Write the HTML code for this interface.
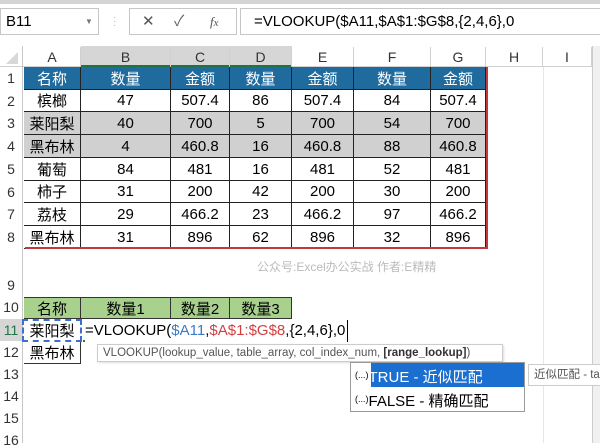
<!DOCTYPE html>
<html><head><meta charset="utf-8"><style>
*{margin:0;padding:0;box-sizing:border-box}
body{width:600px;height:443px;overflow:hidden;background:#fff;position:relative;font-family:"Liberation Sans","Noto Sans CJK SC",sans-serif;color:#000}
.a{position:absolute}
.c{position:absolute;display:flex;align-items:center;justify-content:center;font-size:15px;white-space:nowrap}
.rh{position:absolute;left:0;width:22px;font-size:14px;color:#333;text-align:center}
.ch{position:absolute;top:47px;height:20px;font-size:14px;color:#333;text-align:center;line-height:20px;border-right:1px solid #d0d0d0}
</style></head><body>
<div class="a" style="left:0;top:0;width:600px;height:4px;background:#d4d4d4"></div>
<div class="a" style="left:0;top:8px;width:99px;height:27px;border:1px solid #c6c6c6;font-size:15px;line-height:25px;padding-left:5px">B11<span style="position:absolute;left:84px;font-size:8px;color:#777">▼</span></div>
<div class="a" style="left:113px;top:16px;color:#bbb;font-size:10px;line-height:4px">·<br>·<br>·</div>
<div class="a" style="left:129px;top:8px;width:108px;height:27px;border:1px solid #c6c6c6;font-size:15px;color:#555;line-height:25px"><span class="a" style="left:12px">✕</span><span class="a" style="left:44px;color:#666">✓</span><span class="a" style="left:80px;font-family:'Liberation Serif';font-style:italic;font-size:13px">f<small>x</small></span></div>
<div class="a" style="left:240px;top:8px;width:362px;height:27px;border:1px solid #c6c6c6;font-size:15px;line-height:25px;padding-left:13px">=VLOOKUP($A11,$A$1:$G$8,{2,4,6},0</div>
<div class="a" style="left:0;top:46px;width:592px;height:21px;background:#fff;border-bottom:1px solid #d0d0d0"></div>
<div class="a" style="left:6px;top:52px;width:0;height:0;border-left:12px solid transparent;border-bottom:12px solid #d8d8d8"></div>
<div class="a" style="left:81px;top:46px;width:211px;height:21px;background:#d6d6d6;border-bottom:2px solid #217346"></div>
<div class="ch" style="left:24px;width:57px">A</div><div class="ch" style="left:81px;width:90px">B</div><div class="ch" style="left:171px;width:59px">C</div><div class="ch" style="left:230px;width:62px">D</div><div class="ch" style="left:292px;width:62px">E</div><div class="ch" style="left:354px;width:77px">F</div><div class="ch" style="left:431px;width:55px">G</div><div class="ch" style="left:486px;width:57px">H</div><div class="ch" style="left:543px;width:49px">I</div>
<div class="a" style="left:22px;top:46px;width:1px;height:397px;background:#c8c8c8"></div>
<div class="a" style="left:592px;top:46px;width:8px;height:397px;background:#f0f0f0;border-left:1px solid #ccc"></div>
<div class="a" style="left:543px;top:67px;width:1px;height:376px;background:#e6e6e6"></div>
<div id="rows"></div>
<div class="a" style="left:25px;top:247px;width:463px;height:2px;background:#c0393b"></div>
<div class="a" style="left:486px;top:67px;width:2px;height:181px;background:#c0393b"></div>
<div class="a" style="left:257px;top:258px;font-size:12px;color:#bbb">公众号:Excel办公实战 作者:E精精</div>
<script>
(function(){
var cols=[24,81,171,230,292,354,431,486];
var data=[["名称","数量","金额","数量","金额","数量","金额"],["槟榔","47","507.4","86","507.4","84","507.4"],["莱阳梨","40","700","5","700","54","700"],["黑布林","4","460.8","16","460.8","88","460.8"],["葡萄","84","481","16","481","52","481"],["柿子","31","200","42","200","30","200"],["荔枝","29","466.2","23","466.2","97","466.2"],["黑布林","31","896","62","896","32","896"]];
var h="";
for(var r=0;r<8;r++){var ty=Math.round(67+r*22.7);var ny=Math.round(67+(r+1)*22.7);
 h+='<div class="rh" style="top:'+(ty+3)+'px">'+(r+1)+'</div>';
 for(var c=0;c<7;c++){var bg=r==0?'#1f6b9e':(r==2||r==3?'#d0d0d0':'#fff');var col=r==0?'#fff':'#000';
 h+='<div class="c" style="left:'+cols[c]+'px;top:'+ty+'px;width:'+(cols[c+1]-cols[c])+'px;height:'+(ny-ty)+'px;background:'+bg+';color:'+col+';border-right:1px solid #222;border-bottom:1px solid #222">'+data[r][c]+'</div>';}}
var rl=[[9,249,48],[10,297,22],[11,319,23],[12,342,22],[13,364,22],[14,386,22],[15,408,22],[16,430,22]];
rl.forEach(function(x){h+='<div class="rh" style="top:'+(x[1]+x[2]-20)+'px;'+(x[0]==11?'background:#d6d6d6;color:#217346;height:22px;top:319px;line-height:22px':'')+'">'+x[0]+'</div>';});
var g=[24,81,171,230,292];var t=["名称","数量1","数量2","数量3"];
for(var c=0;c<4;c++)h+='<div class="c" style="left:'+g[c]+'px;top:297px;width:'+(g[c+1]-g[c])+'px;height:22px;background:#a9d18e;border:1px solid #333;border-left:'+(c?0:1)+'px">'+t[c]+'</div>';
h+='<div class="c" style="left:24px;top:342px;width:57px;height:22px;border-right:1px solid #333;border-bottom:1px solid #333">黑布林</div>';
h+='<div class="c" style="left:22px;top:319px;width:60px;height:23px;border:2px dashed #3c6fd0">莱阳梨</div>';
h+='<div class="a" style="left:83px;top:319px;width:210px;height:23px;background:#fff;border-bottom:2px solid #217346"></div>';
h+='<div class="a" style="left:85px;top:320px;font-size:15px;line-height:22px;background:#fff;padding-right:2px;border-right:1px solid #000">=VLOOKUP(<span style="color:#3b7ac7">$A11</span>,<span style="color:#d24040">$A$1:$G$8</span>,{2,4,6},0</div>';
h+='<div class="a" style="left:97px;top:344px;width:406px;height:18px;border:1px solid #ccc;background:#fff;font-size:11.5px;color:#555;line-height:16px;padding-left:5px;box-shadow:1px 1px 2px #ddd">VLOOKUP(lookup_value, table_array, col_index_num, <b style="color:#333">[range_lookup]</b>)</div>';
h+='<div class="a" style="left:350px;top:362px;width:175px;height:50px;border:1px solid #999;background:#fff"></div>';
h+='<div class="a" style="left:371px;top:363px;width:153px;height:24px;background:#1a6fd0"></div>';
h+='<div class="a" style="left:355px;top:364px;font-size:15px;line-height:22px"><span style="font-size:9px;vertical-align:4px">(...)</span><span style="color:#fff">TRUE - 近似匹配</span></div>';
h+='<div class="a" style="left:355px;top:388px;font-size:15px;line-height:22px"><span style="font-size:9px;vertical-align:4px">(...)</span>FALSE - 精确匹配</div>';
h+='<div class="a" style="left:528px;top:364px;width:80px;height:22px;border:1px solid #ccc;background:#fff;font-size:11.5px;color:#555;line-height:20px;padding-left:5px;white-space:nowrap">近似匹配 - ta</div>';
document.getElementById('rows').innerHTML=h;
})();
</script>
</body></html>
